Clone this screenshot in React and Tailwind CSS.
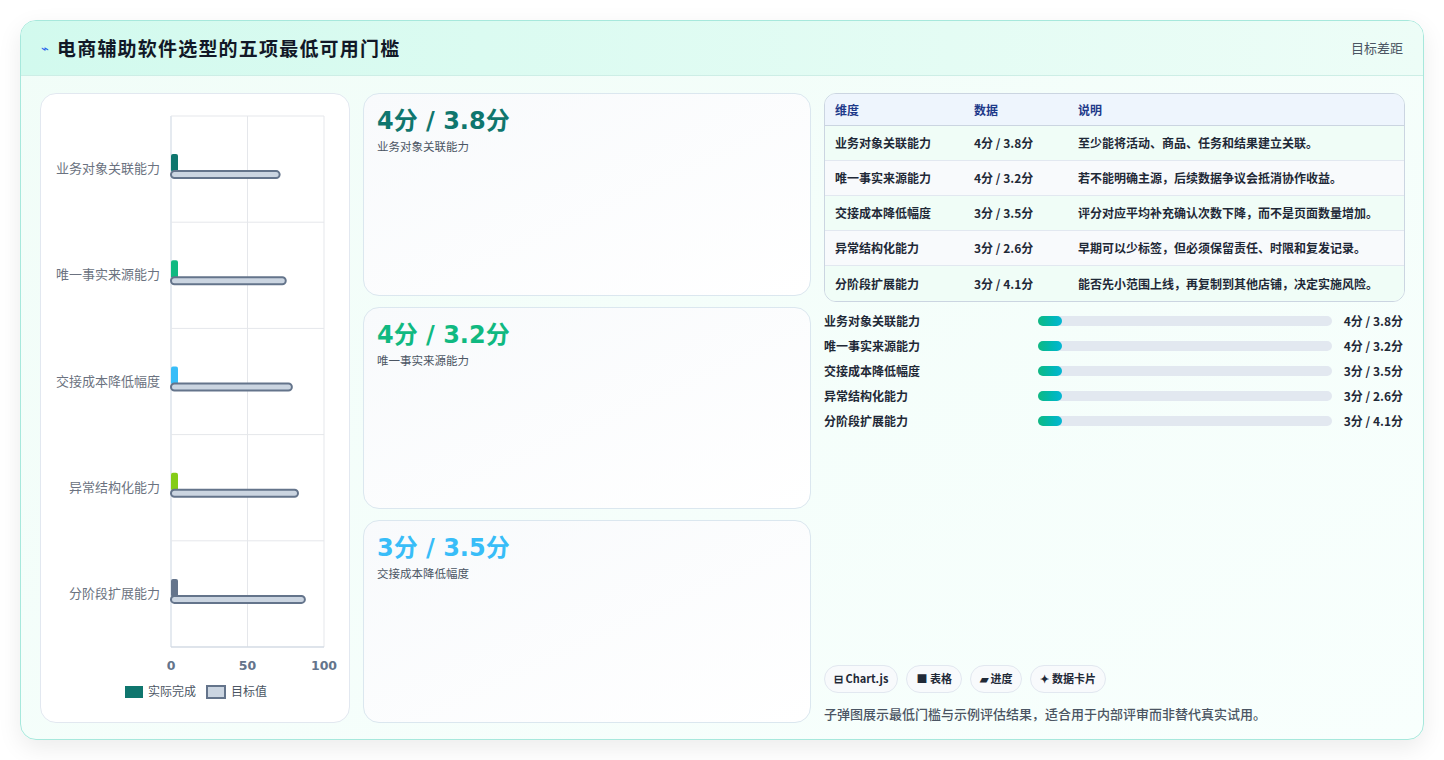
const F = { fontFamily: '"Noto Sans CJK SC","Noto Sans",sans-serif' };
const rows = [
  ["业务对象关联能力", "4分 / 3.8分", "至少能将活动、商品、任务和结果建立关联。", "#0f766e", 71],
  ["唯一事实来源能力", "4分 / 3.2分", "若不能明确主源，后续数据争议会抵消协作收益。", "#10b981", 75],
  ["交接成本降低幅度", "3分 / 3.5分", "评分对应平均补充确认次数下降，而不是页面数量增加。", "#38bdf8", 79],
  ["异常结构化能力", "3分 / 2.6分", "早期可以少标签，但必须保留责任、时限和复发记录。", "#84cc16", 83],
  ["分阶段扩展能力", "3分 / 4.1分", "能否先小范围上线，再复制到其他店铺，决定实施风险。", "#64748b", 87.5],
];

function Chart() {
  const x0 = 130, w = 153, y0 = 22, rh = 106.2;
  return (
    <svg width="310" height="628" style={F}>
      {[0, 50, 100].map((v, i) => (
        <line key={i} x1={x0 + (w * v) / 100} x2={x0 + (w * v) / 100} y1={y0} y2={553} stroke={i === 0 ? "#cbd5e1" : "#e5e7eb"} />
      ))}
      {[0, 1, 2, 3, 4, 5].map((i) => (
        <line key={i} x1={x0} x2={x0 + w} y1={y0 + i * rh} y2={y0 + i * rh} stroke="#e5e7eb" />
      ))}
      <line x1={x0} x2={x0 + w} y1={553} y2={553} stroke="#cbd5e1" />
      {rows.map((r, i) => {
        const cy = y0 + i * rh + rh / 2;
        return (
          <g key={i}>
            <text x={119} y={cy + 4} textAnchor="end" fontSize="13" fill="#6b7280">{r[0]}</text>
            <rect x={x0} y={cy - 15} width={7} height={18} rx={2} fill={r[3]} />
            <rect x={x0} y={cy + 2} width={(w * r[4]) / 100} height={7} rx={3.5} fill="#cbd5e1" stroke="#64748b" strokeWidth="2" />
          </g>
        );
      })}
      {[0, 50, 100].map((v) => (
        <text key={v} x={x0 + (w * v) / 100} y={576} textAnchor="middle" fontSize="12.5" fontWeight="600" fill="#64748b" fontFamily="DejaVu Sans, sans-serif">{v}</text>
      ))}
      <rect x={84} y={592} width={18} height={12} fill="#0f766e" />
      <text x={107} y={602} fontSize="12" fill="#4b5563">实际完成</text>
      <rect x={166} y={592} width={18} height={12} fill="#cbd5e1" stroke="#64748b" strokeWidth="2" />
      <text x={190} y={602} fontSize="12" fill="#4b5563">目标值</text>
    </svg>
  );
}

const NUM = { fontFamily: '"DejaVu Sans","Noto Sans CJK SC",sans-serif' };

export default function App() {
  return (
    <div className="w-[1444px] h-[760px] bg-white pt-[20px] pl-[20px]" style={F}>
      <div className="w-[1404px] h-[720px] rounded-2xl border border-[#a7e8dc] shadow-[0_8px_24px_rgba(0,0,0,0.08)] overflow-hidden bg-gradient-to-br from-[#f1fdf8] to-[#f8fffd] flex flex-col">
        <div className="h-[55px] shrink-0 flex items-center justify-between px-5 bg-gradient-to-r from-[#d2faee] to-[#edfdf7] border-b border-[#cdeee6]">
          <div className="flex items-center gap-[8px]">
            <span className="text-[#2563eb] text-[13px]">⌁</span>
            <span className="text-[19px] font-bold text-[#111827] tracking-[1.2px]">电商辅助软件选型的五项最低可用门槛</span>
          </div>
          <span className="text-[13px] text-[#4b5563]">目标差距</span>
        </div>
        <div className="flex flex-1 pt-[17px] pb-[18px] pl-[19px] pr-[18px] gap-[13px]">
          <div className="w-[310px] bg-white rounded-2xl border border-[#e2e8f0]"><Chart /></div>
          <div className="w-[448px] flex flex-col gap-[11px]">
            {rows.slice(0, 3).map((r, i) => (
              <div key={i} className="flex-1 rounded-2xl border border-[#dbe7ef] bg-gradient-to-br from-[#f8fafc] to-white px-[13px] pt-[10px]">
                <div className="text-[24px] font-bold leading-[34px]" style={{ ...NUM, color: r[3] }}>{r[1]}</div>
                <div className="text-[11.5px] text-[#4b5563]">{r[0]}</div>
              </div>
            ))}
          </div>
          <div className="flex-1 flex flex-col">
            <div className="rounded-xl border border-[#cbd5e1] overflow-hidden text-[12px]">
              <div className="h-[32px] flex items-center bg-[#eef5fd] text-[#1e3a8a] font-semibold border-b border-[#cbd5e1]">
                <div className="w-[149px] pl-[10px]">维度</div><div className="w-[104px]">数据</div><div>说明</div>
              </div>
              {rows.map((r, i) => (
                <div key={i} className={`h-[35px] flex items-center font-semibold text-[#1f2937] ${i % 2 ? "bg-[#f8fafc]" : "bg-[#f0fdf7]"} ${i < 4 ? "border-b border-[#e2e8f0]" : ""}`}>
                  <div className="w-[149px] pl-[10px]">{r[0]}</div><div className="w-[104px]">{r[1]}</div><div>{r[2]}</div>
                </div>
              ))}
            </div>
            <div className="mt-[9px] flex flex-col gap-[5px]">
              {rows.map((r, i) => (
                <div key={i} className="h-[20px] flex items-center text-[12px] font-semibold text-[#1f2937]">
                  <div className="w-[214px]">{r[0]}</div>
                  <div className="w-[294px] h-[10px] rounded-full bg-[#e2e8f0]">
                    <div className="w-[24px] h-[10px] rounded-full bg-gradient-to-r from-[#10b981] to-[#06b6d4]" />
                  </div>
                  <div className="flex-1 text-right pr-[2px]">{r[1]}</div>
                </div>
              ))}
            </div>
            <div className="mt-auto flex gap-2 text-[11px] font-semibold text-[#1f2937]">
              {["⊟ Chart.js", "■ 表格", "▰ 进度", "✦ 数据卡片"].map((t) => (
                <div key={t} className="h-[28px] px-[9px] flex items-center rounded-full border border-[#e2e8f0] bg-[#f8fafc]">{t}</div>
              ))}
            </div>
            <div className="mt-[11px] text-[13px] text-[#4b5563] font-medium">子弹图展示最低门槛与示例评估结果，适合用于内部评审而非替代真实试用。</div>
          </div>
        </div>
      </div>
    </div>
  );
}
